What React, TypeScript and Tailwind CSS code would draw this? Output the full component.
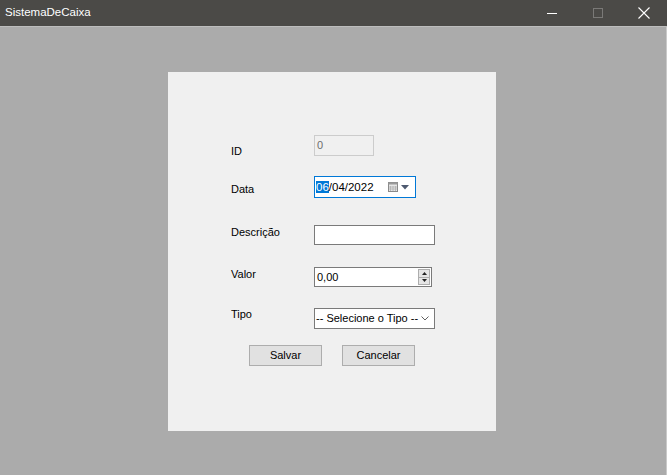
import React from "react";

export default function App() {
  return (
    <div className="w-[667px] h-[475px] flex flex-col bg-[#ababab] overflow-hidden font-['Liberation_Sans',Arial,sans-serif] text-black">
      {/* title bar */}
      <div className="h-[26px] shrink-0 flex items-center bg-[#4b4a47] text-white">
        <span className="pl-[5px] text-[11.5px] leading-none">SistemaDeCaixa</span>
        <div className="ml-auto flex h-full">
          <div className="w-[46px] h-full flex items-center justify-center">
            <div className="w-[10px] h-px bg-white" />
          </div>
          <div className="w-[46px] h-full flex items-center justify-center">
            <div className="w-[10px] h-[10px] border border-[#7a7977]" />
          </div>
          <div className="w-[46px] h-full flex items-center justify-center">
            <svg width="12" height="12" viewBox="0 0 12 12">
              <path d="M0.5 0.5 L11.5 11.5 M11.5 0.5 L0.5 11.5" stroke="#ffffff" strokeWidth="1.1" fill="none" />
            </svg>
          </div>
        </div>
      </div>
      <div className="h-px shrink-0 bg-[#bdbdbd]" />

      {/* client area */}
      <div className="flex-1 border-r border-[#c9c9c9]">
        <div className="ml-[168px] mt-[45px] w-[328px] h-[359px] bg-[#f0f0f0] pt-[63px] pl-[63px] text-[11px] leading-[13px]">
          {/* ID */}
          <div className="flex items-start h-[21px]">
            <span className="w-[83px] pt-[10px]">ID</span>
            <div className="w-[60px] h-[21px] border border-[#cccccc] bg-[#f0f0f0] pl-[2px] pt-[3px] text-[#6d6d6d]">0</div>
          </div>

          {/* Data */}
          <div className="flex items-start mt-[20px]">
            <span className="w-[83px] pt-[7px]">Data</span>
            <div className="w-[102px] h-[22px] border border-[#0078d7] bg-white flex items-center pl-[1px]">
              <span className="text-[11.5px]">
                <span className="bg-[#0078d7] text-white">06</span>/04/2022
              </span>
              <svg className="ml-[14px]" width="10" height="10" viewBox="0 0 10 10">
                <rect x="0.5" y="0.5" width="9" height="9" fill="#e6e6e6" stroke="#8a8a8a" />
                <rect x="0.5" y="0.5" width="9" height="2" fill="#9a9a9a" />
                <path d="M2.5 4 V9 M5 4 V9 M7.5 4 V9 M1 5 H9 M1 7 H9" stroke="#b0b0b0" strokeWidth="0.8" />
              </svg>
              <svg className="ml-[3px]" width="8" height="5" viewBox="0 0 8 5">
                <path d="M0 0 H8 L4 4.5 Z" fill="#4e5a70" />
              </svg>
            </div>
          </div>

          {/* Descrição */}
          <div className="flex items-start mt-[27px]">
            <span className="w-[83px] pt-[1px]">Descrição</span>
            <div className="w-[121px] h-[20px] border border-[#7a7a7a] bg-white" />
          </div>

          {/* Valor */}
          <div className="flex items-start mt-[22px]">
            <span className="w-[83px] pt-[1px]">Valor</span>
            <div className="w-[118px] h-[20px] border border-[#7a7a7a] bg-white flex items-center pl-[2px]">
              <span>0,00</span>
              <div className="ml-auto mr-[1px] w-[12px] h-[16px] flex flex-col border border-[#adadad] bg-[#e5e5e5]">
                <div className="flex-1 flex items-center justify-center border-b border-[#adadad]">
                  <svg width="5" height="3" viewBox="0 0 5 3">
                    <path d="M0 3 H5 L2.5 0 Z" fill="#222" />
                  </svg>
                </div>
                <div className="flex-1 flex items-center justify-center">
                  <svg width="5" height="3" viewBox="0 0 5 3">
                    <path d="M0 0 H5 L2.5 3 Z" fill="#222" />
                  </svg>
                </div>
              </div>
            </div>
          </div>

          {/* Tipo */}
          <div className="flex items-start mt-[21px]">
            <span className="w-[83px]">Tipo</span>
            <div className="w-[121px] h-[21px] border border-[#7a7a7a] bg-white flex items-center pl-[1px]">
              <span>-- Selecione o Tipo --</span>
              <svg className="ml-auto mr-[5px]" width="8" height="5" viewBox="0 0 8 5">
                <path d="M0.5 0.5 L4 4 L7.5 0.5" stroke="#606060" fill="none" strokeWidth="1" />
              </svg>
            </div>
          </div>

          {/* buttons */}
          <div className="flex mt-[16px] ml-[18px] gap-[20px]">
            <button className="w-[73px] h-[21px] border border-[#adadad] bg-[#e1e1e1] text-[11px]">Salvar</button>
            <button className="w-[73px] h-[21px] border border-[#adadad] bg-[#e1e1e1] text-[11px]">Cancelar</button>
          </div>
        </div>
      </div>
    </div>
  );
}
